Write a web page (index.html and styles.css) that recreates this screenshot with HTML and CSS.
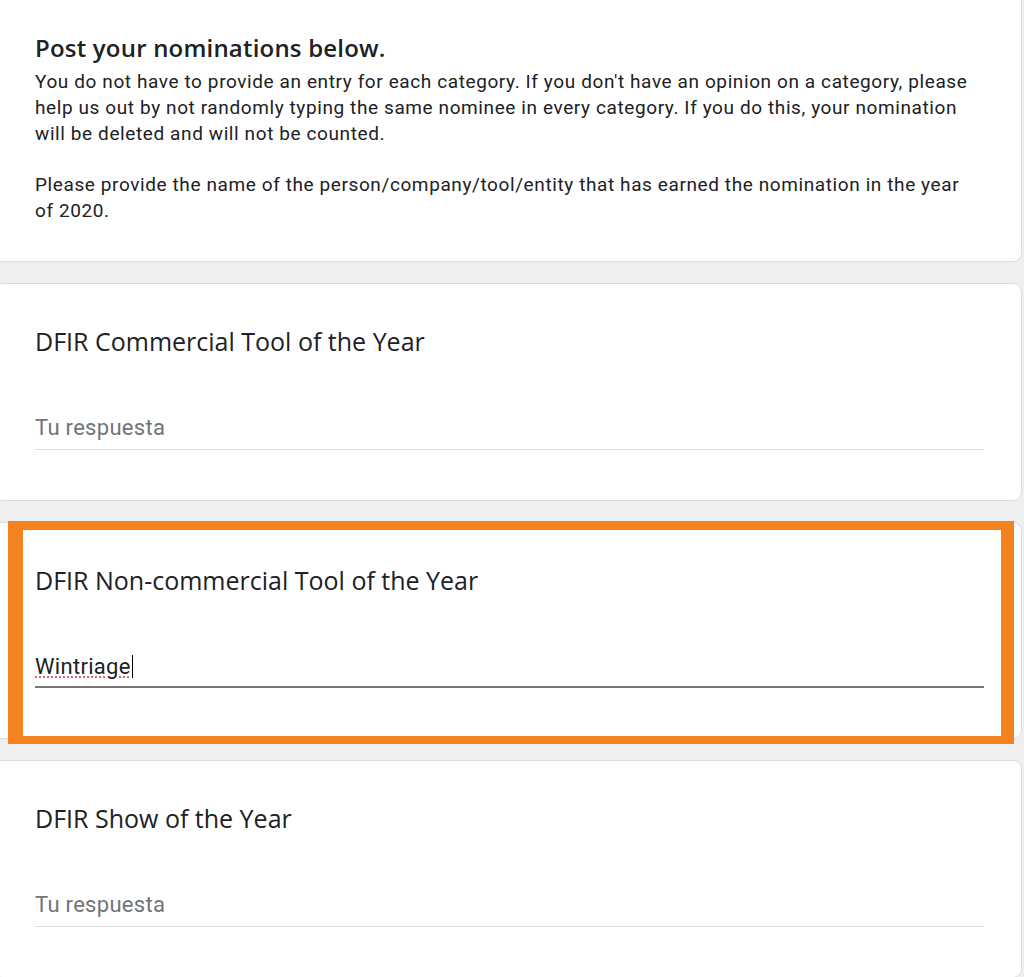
FILE: index.html
```html
<!DOCTYPE html>
<html lang="es">
<head>
    <meta charset="UTF-8">
    <title>DFIR Nominations</title>
    <link rel="stylesheet" href="styles.css">
</head>
<body>

<div class="form">
    <div class="card intro">
        <h2 class="intro-title">Post your nominations below.</h2>
        <p class="intro-text">You do not have to provide an entry for each category. If you don't have an opinion on a category, please<br>
            help us out by not randomly typing the same nominee in every category. If you do this, your nomination<br>
            will be deleted and will not be counted.</p>
        <p class="intro-text spaced">Please provide the name of the person/company/tool/entity that has earned the nomination in the year<br>
            of 2020.</p>
    </div>

    <div class="card question">
        <div class="question-title">DFIR Commercial Tool of the Year</div>
        <div class="answer empty">Tu respuesta</div>
    </div>

    <!-- answered question, highlighted -->
    <div class="card question">
        <div class="question-title">DFIR Non-commercial Tool of the Year</div>
        <div class="answer filled"><span class="misspelled">Wintriage</span><span class="caret"></span></div>
        <div class="highlight"></div>
    </div>

    <div class="card question">
        <div class="question-title">DFIR Show of the Year</div>
        <div class="answer empty">Tu respuesta</div>
    </div>
</div>

</body>
</html>
```

FILE: styles.css
```css
body {
    margin: 0;
    padding: 0;
    background-color: #efefef;
    font-family: Roboto, "Liberation Sans", Arial, sans-serif;
    color: #202124;
    overflow: hidden;
}
.form {
    display: flex;
    flex-direction: column;
    gap: 21px;
    width: 1029px;
    margin-left: -7px;
    margin-top: -12px;
}
.card {
    position: relative;
    background-color: white;
    border: 1px solid #dadce0;
    border-radius: 9px;
    padding: 0 37px 0 41px;
}
.intro {
    padding-top: 44px;
    padding-bottom: 37px;
}
.intro-title {
    margin: 0;
    font-family: "Open Sans", Roboto, sans-serif;
    font-size: 24px;
    font-weight: 600;
    line-height: 30px;
    letter-spacing: 0.2px;
}
.intro-text {
    margin: 6px 0 0 0;
    font-size: 19px;
    line-height: 25.8px;
    letter-spacing: 0.6px;
    white-space: nowrap;
}
.intro-text.spaced {
    margin-top: 25.8px;
}
.question {
    padding-top: 41px;
    padding-bottom: 50px;
}
.question-title {
    font-family: "Open Sans", Roboto, sans-serif;
    font-size: 25px;
    line-height: 32px;
}
.answer {
    margin-top: 57px;
    font-size: 22px;
    line-height: 28px;
    padding-bottom: 7px;
    letter-spacing: 0.3px;
    display: flex;
    align-items: center;
}
.answer.empty {
    color: #70757a;
    border-bottom: 1px solid #dadce0;
}
.answer.filled {
    color: #202124;
    border-bottom: 2px solid #767676;
    padding-bottom: 5px;
}
.misspelled {
    text-decoration: underline dotted #e06666;
    text-decoration-thickness: 2px;
    text-underline-offset: 3px;
}
.caret {
    display: inline-block;
    width: 1px;
    height: 23px;
    background-color: #000;
    margin-left: 1px;
}
/* orange annotation box drawn over the answered question */
.highlight {
    position: absolute;
    left: 14px;
    top: -2px;
    width: 1006px;
    height: 223px;
    box-sizing: border-box;
    border-style: solid;
    border-color: #f58220;
    border-width: 9px 13px 8px 15px;
    pointer-events: none;
}
```
